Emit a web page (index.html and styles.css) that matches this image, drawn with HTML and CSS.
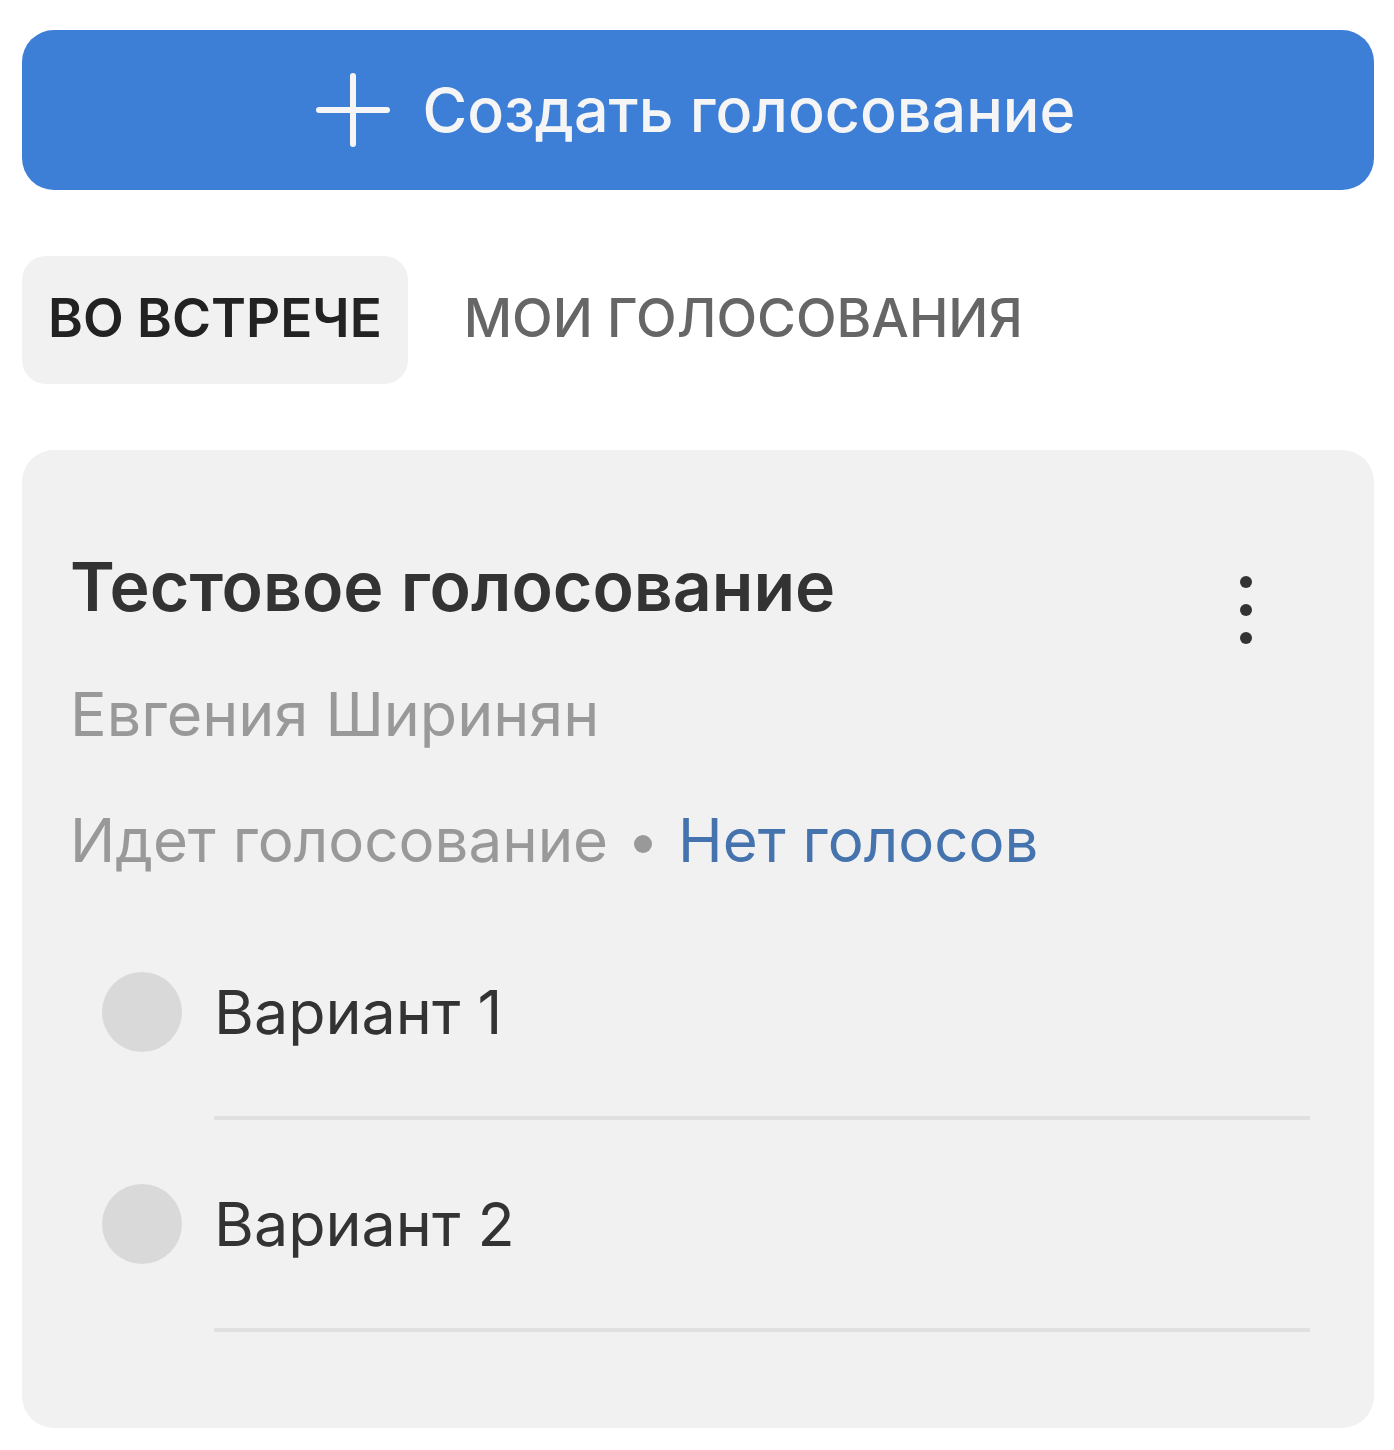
FILE: index.html
```html
<!DOCTYPE html>
<html lang="ru">
<head>
<meta charset="utf-8">
<meta name="viewport" content="width=device-width, initial-scale=1">
<title>Голосования</title>
<link rel="stylesheet" href="styles.css">
</head>
<body>
<main class="panel">
  <button class="create" type="button">
    <svg class="create-icon" viewBox="0 0 76 76" aria-hidden="true"><path d="M38 4v68M4 38h68"/></svg>
    <span>Создать голосование</span>
  </button>
  <nav class="tabs">
    <button class="tab tab-active" type="button">ВО ВСТРЕЧЕ</button>
    <button class="tab" type="button">МОИ ГОЛОСОВАНИЯ</button>
  </nav>
  <article class="card">
    <header class="card-head">
      <h2 class="title">Тестовое голосование</h2>
      <button class="menu" type="button" aria-label="Меню">
        <svg class="menu-icon" viewBox="0 0 16 72" aria-hidden="true"><circle cx="8" cy="8" r="6"/><circle cx="8" cy="36" r="6"/><circle cx="8" cy="64" r="6"/></svg>
      </button>
    </header>
    <p class="author">Евгения Ширинян</p>
    <p class="status"><span>Идет голосование</span><span class="dot"></span><a class="votes" href="#votes">Нет голосов</a></p>
    <form class="options">
      <label class="option"><input class="radio" type="radio" name="vote"><span class="option-text">Вариант 1</span></label>
      <label class="option"><input class="radio" type="radio" name="vote"><span class="option-text">Вариант 2</span></label>
    </form>
  </article>
</main>
</body>
</html>
```
FILE: styles.css
```css
* {
  box-sizing: border-box;
}

body {
  margin: 0;
  background: #fff;
  color: #333;
  font-family: Inter, "Noto Sans", sans-serif;
  font-size: 61px;
  line-height: 80px;
}

button {
  border: 0;
  background: none;
  font: inherit;
}

.panel {
  padding: 30px 20px 22px 22px;
}

.create {
  display: flex;
  align-items: center;
  justify-content: center;
  gap: 32px;
  width: 100%;
  height: 160px;
  padding: 0 6px 0 0;
  border-radius: 32px;
  background: #3d7ed7;
  color: #f5f5f5;
  font-weight: 500;
}

.create-icon {
  width: 76px;
  height: 76px;
  fill: none;
  stroke: #f5f5f5;
  stroke-width: 6;
  stroke-linecap: round;
}

.tabs {
  display: flex;
  gap: 30px;
  margin: 66px 0;
}

.tab {
  height: 128px;
  padding: 0 26px 4px;
  border-radius: 24px;
  color: #666;
  font-size: 53px;
  font-weight: 500;
}

.tab-active {
  background: #f1f1f1;
  color: #222;
  font-weight: 600;
}

.card {
  padding: 96px 64px 96px 48px;
  border-radius: 32px;
  background: #f1f1f1;
}

.card-head {
  display: flex;
  justify-content: space-between;
}

.title {
  margin: 0;
  font-size: 68px;
  font-weight: 600;
}

.menu {
  display: flex;
  padding: 28px 56px 0;
}

.menu-icon {
  width: 16px;
  height: 72px;
  fill: #333;
}

.author {
  margin: 28px 0 46px;
  color: #999;
}

.status {
  display: flex;
  align-items: center;
  gap: 26px;
  margin: 0;
  color: #999;
  font-size: 60px;
}

.dot {
  width: 18px;
  height: 18px;
  margin-top: 8px;
  border-radius: 50%;
  background: #999;
}

.votes {
  color: #4473ad;
  text-decoration: none;
}

.options {
  margin-top: 28px;
}

.option {
  display: flex;
  align-items: center;
  gap: 32px;
  padding-left: 32px;
}

.radio {
  appearance: none;
  flex: none;
  width: 80px;
  height: 80px;
  margin: 0 0 4px;
  border-radius: 50%;
  background: #d9d9d9;
}

.option-text {
  flex: 1;
  padding: 64px 0;
  border-bottom: 4px solid #e0e0e0;
}
```
